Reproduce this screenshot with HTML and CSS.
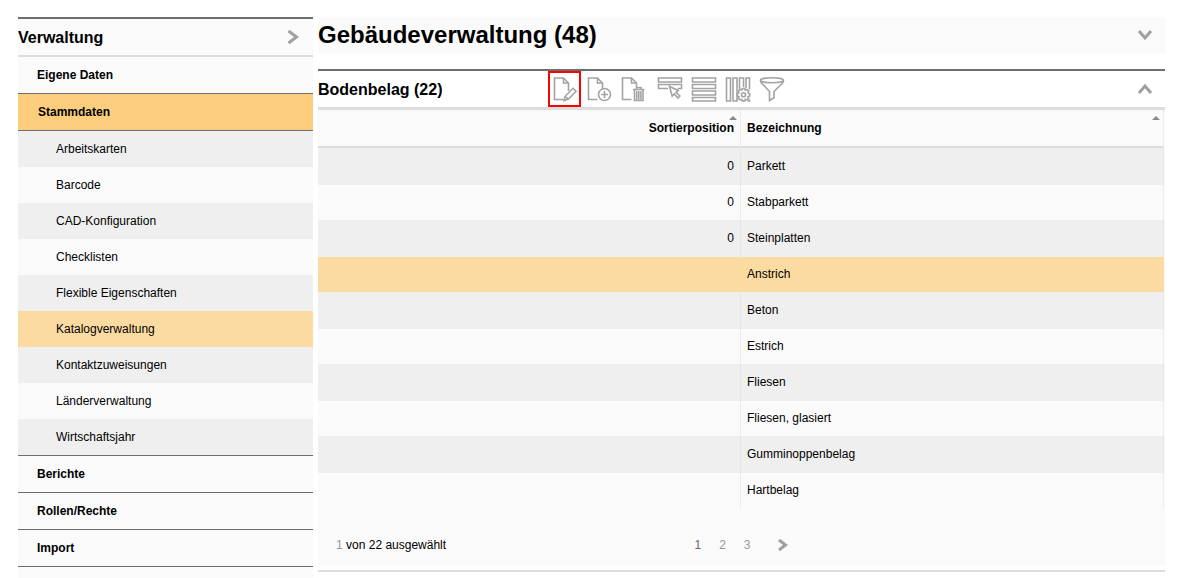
FILE: index.html
```html
<!DOCTYPE html>
<html lang="de">
<head>
<meta charset="utf-8">
<title>Gebäudeverwaltung</title>
<link rel="stylesheet" href="styles.css">
</head>
<body>
<div class="shell">
  <nav class="sidebar" aria-label="Verwaltung">
    <header class="sidebar-head">
      <h2 class="heading">Verwaltung</h2>
      <button class="plain" type="button" aria-label="Einklappen">
        <svg class="chevron" width="16" height="16" viewBox="0 0 16 16"><path d="M3.500 2l8 6-8 6"/></svg>
      </button>
    </header>
    <ul class="list">
      <li class="group"><a class="group-link" href="#">Eigene Daten</a></li>
      <li class="group">
        <a class="group-link open" href="#">Stammdaten</a>
        <ul class="list">
          <li><a class="sub-link" href="#">Arbeitskarten</a></li>
          <li><a class="sub-link" href="#">Barcode</a></li>
          <li><a class="sub-link" href="#">CAD-Konfiguration</a></li>
          <li><a class="sub-link" href="#">Checklisten</a></li>
          <li><a class="sub-link" href="#">Flexible Eigenschaften</a></li>
          <li><a class="sub-link current" href="#">Katalogverwaltung</a></li>
          <li><a class="sub-link" href="#">Kontaktzuweisungen</a></li>
          <li><a class="sub-link" href="#">Länderverwaltung</a></li>
          <li><a class="sub-link" href="#">Wirtschaftsjahr</a></li>
        </ul>
      </li>
      <li class="group"><a class="group-link" href="#">Berichte</a></li>
      <li class="group"><a class="group-link" href="#">Rollen/Rechte</a></li>
      <li class="group"><a class="group-link" href="#">Import</a></li>
    </ul>
  </nav>

  <main class="main">
    <header class="page-head">
      <h1 class="title">Gebäudeverwaltung (48)</h1>
      <button class="plain" type="button" aria-label="Ausklappen">
        <svg class="chevron" width="16" height="16" viewBox="0 0 16 16"><path d="M2 4l6 7 6-7"/></svg>
      </button>
    </header>

    <section class="panel">
      <header class="panel-head">
        <h2 class="heading panel-title">Bodenbelag (22)</h2>
        <div class="toolbar">
          <button class="tool marked" type="button" aria-label="Bearbeiten">
            <svg class="icon" width="34" height="36" viewBox="0 0 34 36"><path d="M15.500 28.500H6.500V7H15.500L20.500 12V20"/><path d="M15.500 7V12H20.500"/><path d="M16 29.500l1.200-4.200 7.800-8 3 3-7.800 8zM17.500 25.500l2.700 2.700"/></svg>
          </button>
          <button class="tool" type="button" aria-label="Neu">
            <svg class="icon" width="34" height="36" viewBox="0 0 34 36"><path d="M15.500 28.500H6.500V7H15.500L20.500 12V17.500"/><path d="M15.500 7V12H20.500"/><circle cx="22.500" cy="23.500" r="6"/><path d="M22.500 20v7M19 23.500h7"/></svg>
          </button>
          <button class="tool" type="button" aria-label="Löschen">
            <svg class="icon" width="34" height="36" viewBox="0 0 34 36"><path d="M15.500 28.500H6.500V7H15.500L20.500 12V16"/><path d="M15.500 7V12H20.500"/><path d="M17 18.500H28.500M20.500 18V16.500h4.500V18M18.500 19V29.500h8.500V19M20.700 20v8.500M22.800 20v8.500M24.900 20v8.500"/></svg>
          </button>
          <button class="tool" type="button" aria-label="Auswählen">
            <svg class="icon" width="34" height="36" viewBox="0 0 34 36"><path d="M8.500 7h23v4h-23zM18 17.500H8.500V13.500h23v4h-4"/><path d="M19.500 15.500l2.700 9.700 2-2.200 3.800 4 1.900-2-3.900-3.700 2.200-1.800z"/></svg>
          </button>
          <button class="tool" type="button" aria-label="Zeilen">
            <svg class="icon" width="34" height="36" viewBox="0 0 34 36"><path d="M8.500 7h23v4h-23zM8.500 13.500h23v4h-23zM8.500 20h23v4h-23zM8.500 26.500h23v3.500h-23z"/></svg>
          </button>
          <button class="tool" type="button" aria-label="Spalten konfigurieren">
            <svg class="icon" width="34" height="36" viewBox="0 0 34 36"><path d="M8.500 7h4v23h-4zM15 7h4v23h-4zM21.500 18V7h4v9M28 17V7h3.500v11.500M31.500 28.500V30H29.500"/><path transform="translate(25.500 23.700)" d="M-1.200-6.200H1.200L1.900-4.500 3.500-5.200 5.200-3.500 4.500-1.900 6.200-1.200V1.200L4.500 1.900 5.200 3.500 3.500 5.200 1.900 4.500 1.200 6.200H-1.200L-1.900 4.500-3.500 5.200-5.200 3.500-4.500 1.900-6.200 1.200V-1.200L-4.500-1.900-5.200-3.500-3.500-5.200-1.900-4.500z"/><circle cx="25.500" cy="23.700" r="2"/></svg>
          </button>
          <button class="tool" type="button" aria-label="Filtern">
            <svg class="icon" width="34" height="36" viewBox="0 0 34 36"><ellipse cx="20" cy="9.300" rx="11.500" ry="2.500"/><path d="M8.500 9.500c0 2 1 2.600 2.300 3.800L17.500 20.500v9l4.500-2.700v-6.300l7.200-7.200c1.300-1.200 2.300-1.800 2.300-3.800"/></svg>
          </button>
        </div>
        <button class="plain collapse" type="button" aria-label="Einklappen">
          <svg class="chevron" width="16" height="16" viewBox="0 0 16 16"><path d="M2 12l6-7 6 7"/></svg>
        </button>
      </header>

      <div class="panel-body">
        <table class="grid">
          <thead>
            <tr>
              <th class="num" scope="col">Sortierposition<span class="sort"></span></th>
              <th scope="col">Bezeichnung<span class="sort"></span></th>
            </tr>
          </thead>
          <tbody>
            <tr><td class="num">0</td><td>Parkett</td></tr>
            <tr><td class="num">0</td><td>Stabparkett</td></tr>
            <tr><td class="num">0</td><td>Steinplatten</td></tr>
            <tr class="selected"><td class="num"></td><td>Anstrich</td></tr>
            <tr><td class="num"></td><td>Beton</td></tr>
            <tr><td class="num"></td><td>Estrich</td></tr>
            <tr><td class="num"></td><td>Fliesen</td></tr>
            <tr><td class="num"></td><td>Fliesen, glasiert</td></tr>
            <tr><td class="num"></td><td>Gumminoppenbelag</td></tr>
            <tr><td class="num"></td><td>Hartbelag</td></tr>
          </tbody>
        </table>
        <footer class="panel-foot">
          <p class="status"><span class="count">1</span> von 22 ausgewählt</p>
          <div class="pager">
            <a class="page active" href="#">1</a>
            <a class="page" href="#">2</a>
            <a class="page" href="#">3</a>
            <button class="plain next" type="button" aria-label="Nächste Seite">
              <svg class="chevron" width="12" height="14" viewBox="0 0 12 14"><path d="M2 2l6.500 5L2 12"/></svg>
            </button>
          </div>
        </footer>
      </div>
    </section>
  </main>
</div>
</body>
</html>
```

FILE: styles.css
```css
* {
  box-sizing: border-box;
}

body {
  margin: 0;
  background: #fff;
  color: #000;
  font-family: "Liberation Sans", Arial, sans-serif;
  font-size: 12px;
  line-height: 16px;
}

a {
  color: inherit;
  text-decoration: none;
}

.shell {
  display: flex;
  gap: 5px;
  min-height: 100vh;
  padding: 17px 17px 0 18px;
}

.heading,
.title,
.status {
  margin: 0;
}

.heading {
  padding-top: 2px;
  font-size: 16px;
  line-height: 20px;
}

.title {
  font-size: 24px;
  line-height: 36px;
}

.plain {
  display: flex;
  padding: 0;
  border: 0;
  background: none;
}

.chevron {
  fill: none;
  stroke: #a0a0a0;
  stroke-width: 3;
}

/* Sidebar */

.sidebar {
  flex: none;
  width: 295px;
  border-top: 2px solid #6e6e6e;
  background: #fafafa;
}

.sidebar-head {
  display: flex;
  align-items: center;
  justify-content: space-between;
  height: 38px;
  padding-right: 12px;
  border-bottom: 2px solid #ddd;
}

.list {
  margin: 0;
  padding: 0;
  list-style: none;
}

.group {
  border-bottom: 1px solid #6e6e6e;
}

.group-link,
.sub-link {
  display: block;
  padding: 10px 19px;
}

.group-link {
  font-weight: bold;
}

.group-link.open {
  padding-left: 20px;
  border-bottom: 1px solid #6e6e6e;
  background: #fbcd7c;
}

.sub-link {
  padding-left: 38px;
}

.list .list li:nth-child(odd) {
  background: #efefef;
}

.sub-link.current {
  background: #fcdba2;
}

/* Main area */

.main {
  flex: 1;
  min-width: 0;
}

.page-head {
  display: flex;
  align-items: center;
  justify-content: space-between;
  margin-bottom: 16px;
  padding-right: 12px;
  background: #fafafa;
}

.panel {
  border-top: 2px solid #6e6e6e;
  border-bottom: 2px solid #ddd;
  padding-bottom: 5px;
}

.panel-head {
  display: flex;
  align-items: center;
  padding-right: 12px;
}

.panel-title {
  width: 230px;
}

.toolbar {
  display: flex;
}

.tool {
  display: flex;
  width: 34px;
  height: 36px;
  padding: 0;
  border: 0;
  background: none;
}

.tool.marked {
  width: 33px;
  margin-right: 1px;
  outline: 2px solid #f00;
  outline-offset: -2px;
}

.icon {
  flex: none;
  fill: none;
  stroke: #a3a3a3;
  stroke-width: 1.6;
}

.collapse {
  margin-left: auto;
}

.panel-body {
  border-top: 3px solid #ddd;
  background: #fafafa;
}

.grid {
  width: 100%;
  border-spacing: 0;
  border-right: 1px solid #fafafa;
  table-layout: fixed;
}

.grid th,
.grid td {
  height: 35px;
  padding: 0 6px;
  border-right: 1px solid #ececec;
  text-align: left;
}

.grid td {
  padding-bottom: 2px;
}

.grid th {
  position: relative;
  height: 38px;
  border-bottom: 2px solid #ddd;
}

.grid tbody tr:nth-child(odd) td {
  height: 37px;
  border-right-color: #e6e6e6;
  background: #efefef;
}

.grid tbody tr.selected td {
  border-right-color: #fcdba2;
  background: #fcdba2;
}

.grid .num {
  text-align: right;
}

.sort {
  position: absolute;
  top: 6px;
  right: 3px;
  border: 4px solid transparent;
  border-top-width: 0;
  border-bottom-color: #888;
}

.panel-foot {
  display: grid;
  grid-template-columns: 1fr auto 1fr;
  align-items: center;
  padding: 29px 18px 12px;
}

.count,
.page {
  color: #999;
}

.pager {
  display: flex;
  align-items: center;
  gap: 18px;
}

.page.active {
  color: #666;
}

.next {
  margin-left: 8px;
}
```
